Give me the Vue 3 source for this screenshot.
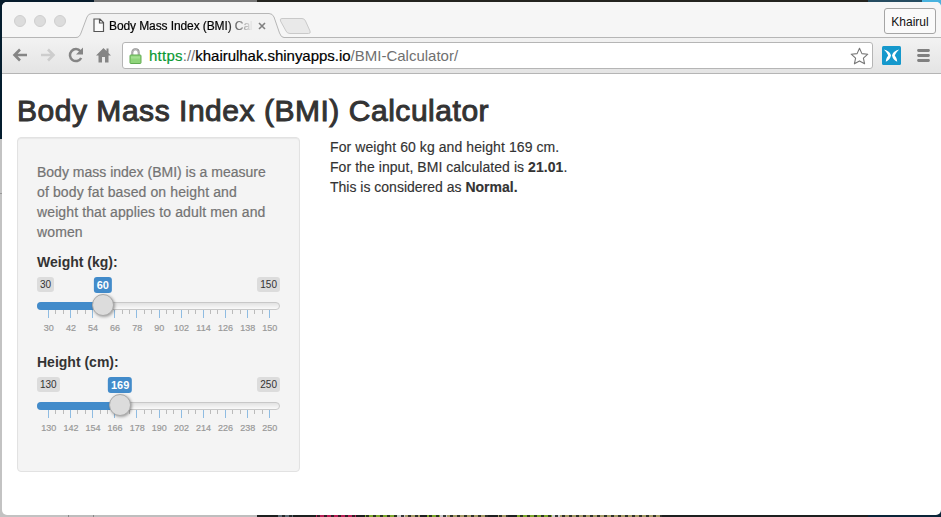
<script setup>
const bmiSliders = [
  { label: 'Weight (kg):', min: 30, max: 150, value: 60, fill: 27.1 },
  { label: 'Height (cm):', min: 130, max: 250, value: 169, fill: 34.2 },
]

function ticks(min) {
  return Array.from({ length: 31 }, (_, i) => ({
    x: 11.5 + (i * 221) / 30,
    major: i % 3 === 0,
    label: min + (i / 3) * 12,
  }))
}
</script>

<template>
  <div class="desktop">
    <div class="code-behind"></div>
    <div class="window">
      <header class="tabstrip">
        <div class="lights"><i></i><i></i><i></i></div>
        <div class="tab">
          <svg class="tab-shape" width="208" height="25" viewBox="0 0 208 25">
            <path d="M0 24.5C3 24.5 4 22.5 5 20L11 4Q12.300 .5 16 .5H193Q196.500 .5 198 4L203.500 20Q205 24.500 208 24.500V25H0Z" fill="#f2f2f2" />
            <path d="M0 24.5C3 24.5 4 22.5 5 20L11 4Q12.300 .5 16 .5H193Q196.500 .5 198 4L203.500 20Q205 24.500 208 24.500" fill="none" stroke="#b6b6b6" />
          </svg>
          <svg class="page-icon" width="12" height="15" viewBox="0 0 12 15">
            <path d="M1 1H7L10.500 4.500V13.500H1ZM6.500 1V5H10.500" fill="#fbfbfb" stroke="#555" stroke-width="1.200" />
          </svg>
          <span class="tab-title">Body Mass Index (BMI) Calc</span>
          <svg class="close" width="8" height="8" viewBox="0 0 8 8"><path d="M1 1L7 7M7 1L1 7" stroke="#808080" stroke-width="1.600" /></svg>
        </div>
        <svg class="new-tab" width="33" height="18" viewBox="0 0 33 18">
          <path d="M3 .5H23Q25.500 .5 26.500 3L31 13Q32 15.500 29.500 15.500H11Q8 15.500 7 13L1.500 3Q.5 .5 3 .5Z" fill="#e9e9e9" stroke="#c9c9c9" />
        </svg>
        <button class="profile">Khairul</button>
      </header>

      <nav class="toolbar">
        <svg class="nav back" width="16" height="14" viewBox="0 0 16 14"><path d="M15 7H2.500M8 1.500L2.500 7L8 12.500" fill="none" stroke="#858585" stroke-width="2.600" /></svg>
        <svg class="nav forward" width="16" height="14" viewBox="0 0 16 14"><path d="M1 7H13.500M8 1.500L13.500 7L8 12.500" fill="none" stroke="#cdcdcd" stroke-width="2.600" /></svg>
        <svg class="nav reload" width="16" height="16" viewBox="0 0 16 16">
          <path d="M12.500 4.200A6 6 0 1 0 13.200 11" fill="none" stroke="#858585" stroke-width="2.500" />
          <path d="M15 .5V7.500H8Z" fill="#858585" />
        </svg>
        <svg class="nav home" width="15" height="16" viewBox="0 0 15 16">
          <path d="M7.500 1L0 8.500H2.500V15.500H6V10H9V15.500H12.500V8.500H15L12.500 6V1.500H10.500V4Z" fill="#858585" />
        </svg>
        <div class="address">
          <svg class="lock" width="13" height="16" viewBox="0 0 13 16">
            <path d="M3.300 8V4.500Q3.300 1.300 6.500 1.300Q9.700 1.300 9.700 4.500V8" fill="none" stroke="#8b8b8b" stroke-width="1.900" />
            <path d="M3.300 8V4.500Q3.300 1.300 6.500 1.300Q9.700 1.300 9.700 4.500V8" fill="none" stroke="#dadada" stroke-width=".6" />
            <rect x="1" y="7" width="11" height="8.500" rx=".8" fill="#8fd47a" stroke="#62ab53" />
            <path d="M2 9.500H11" stroke="#a4df91" stroke-width="2" />
          </svg>
          <span class="url"><b class="scheme">https</b><b class="muted">://</b><b class="host">khairulhak.shinyapps.io</b><b class="muted">/BMI-Calculator/</b></span>
          <svg class="star" width="19" height="18" viewBox="0 0 19 18">
            <path d="M9.500 1.200L11.900 6.600L17.800 7.200L13.400 11.100L14.600 16.800L9.500 13.900L4.400 16.800L5.600 11.100L1.200 7.200L7.100 6.600Z" fill="#fff" stroke="#777" stroke-width="1.100" stroke-linejoin="round" />
          </svg>
        </div>
        <svg class="extension" width="19" height="19" viewBox="0 0 19 19">
          <rect width="19" height="19" rx="1.500" fill="#1598cc" />
          <path d="M1.800 3.600C5.200 4.200 8 6.300 9 9.200C8.600 11.800 7 14.300 3.800 15.800C4 13.200 4.600 11.400 6.200 9.800C5.400 7.300 4 5.500 1.800 3.600ZM17.200 3.600C13.800 4.200 11 6.300 10 9.200C10.400 11.800 12 14.300 15.200 15.800C15 13.200 14.400 11.400 12.800 9.800C13.600 7.300 15 5.500 17.200 3.600Z" fill="#fff" />
        </svg>
        <svg class="menu" width="13" height="13" viewBox="0 0 13 13"><path d="M1.500 1.500H11.500M1.500 6.500H11.500M1.500 11.500H11.500" stroke="#808080" stroke-width="2.800" stroke-linecap="round" /></svg>
      </nav>

      <main class="page">
        <h2>Body Mass Index (BMI) Calculator</h2>
        <div class="columns">
          <form class="well">
            <p class="help">Body mass index (BMI) is a measure<br /><span class="wide">of body fat based on height and<br />weight that applies to adult men and<br />women</span></p>
            <section v-for="s in bmiSliders" :key="s.label" class="control">
              <label>{{ s.label }}</label>
              <div class="bounds">
                <span class="bound">{{ s.min }}</span>
                <span class="bound">{{ s.max }}</span>
                <span class="current" :style="{ left: s.fill + '%' }">{{ s.value }}</span>
              </div>
              <div class="track">
                <div class="bar" :style="{ width: s.fill + '%' }"></div>
                <div class="handle" :style="{ left: s.fill + '%' }"></div>
              </div>
              <svg class="grid" width="243" height="26" viewBox="0 0 243 26">
                <g v-for="t in ticks(s.min)" :key="t.x">
                  <rect :x="Math.round(t.x - 0.5)" y="0" width="1" :height="t.major ? 8 : 4" :fill="t.major ? '#8fbce2' : '#bbb'" />
                  <text v-if="t.major" :x="t.x + 0.3" y="21" text-anchor="middle">{{ t.label }}</text>
                </g>
              </svg>
            </section>
          </form>
          <div class="result">
            <div class="wide">For weight 60 kg and height 169 cm.</div>
            <div class="r2">For the input, BMI calculated is <strong>21.01</strong>.</div>
            <div>This is considered as <strong>Normal.</strong></div>
          </div>
        </div>
      </main>
    </div>
  </div>
</template>

<style>
body {
  margin: 0;
  overflow: hidden;
}
</style>

<style scoped>
* {
  box-sizing: border-box;
}
.desktop {
  position: relative;
  width: 941px;
  height: 517px;
  padding: 2px 0 2px 2px;
  overflow: hidden;
  font-family: "Liberation Sans", Arial, sans-serif;
  color: #333;
  background:
    linear-gradient(90deg, #061b2b 94px, #777 94px 257px, #24241f 257px 868px, #254b60 868px 922px, #49b3df 922px) 0 0 / 100% 8px no-repeat,
    linear-gradient(90deg, #c2c2c2 68px, #888 68px 69px, #bdbdbd 69px 93px, #888 93px 94px, #bebebe 94px 257px, #1d1f1f 257px 868px, #0a2438 868px) 0 100% / 100% 8px no-repeat,
    linear-gradient(#041d2e 139px, #c3c3c3 139px 193px, #999 193px 194px, #c3c3c3 194px) 0 0 / 8px 100% no-repeat,
    #0a2438;
}
/* Top edge of the editor line peeking out under the window */
.code-behind {
  position: absolute;
  left: 278px;
  top: 515px;
  width: 384px;
  height: 2px;
  background: linear-gradient(90deg, #5d6b73 15px, transparent 15px 38px, #b81f55 38px 78px, transparent 78px 87px, #7da62d 87px 119px, #c8c8c8 119px 127px, #a39a66 127px 142px, transparent 142px 149px, #7da62d 149px 162px, #c8c8c8 162px 169px, #a39a66 169px 210px, transparent 210px 220px, #a39a66 220px 230px, transparent 230px 239px, #7da62d 239px 274px, #c8c8c8 274px 282px, #a39a66 282px);
  mask-image: repeating-linear-gradient(90deg, #000 0 4px, rgba(0, 0, 0, 0.15) 4px 7px);
}
.window {
  position: relative;
  height: 513px;
  border-radius: 5px;
  background: #fff;
  overflow: hidden;
}
.tabstrip {
  display: flex;
  height: 36px;
  background: #f6f6f6;
  border-bottom: 1px solid #b6b6b6;
}
.lights {
  display: flex;
  gap: 8px;
  padding: 13px 0 0 12px;
  width: 74px;
}
.lights i {
  width: 12px;
  height: 12px;
  border-radius: 50%;
  background: #dcdcdc;
  border: 1px solid #cfcfcf;
}
.tab {
  position: relative;
  display: flex;
  align-items: center;
  width: 208px;
  height: 25px;
  margin-top: 11px;
  padding-left: 17px;
}
.tab-shape {
  position: absolute;
  left: 0;
  top: 0;
}
.page-icon {
  position: relative;
  margin-right: 4px;
}
.tab-title {
  position: relative;
  width: 143px;
  overflow: hidden;
  white-space: nowrap;
  font-size: 12px;
  line-height: 16px;
  letter-spacing: -0.1px;
  color: #000;
  -webkit-text-stroke: 0.2px #000;
  mask-image: linear-gradient(90deg, #000 116px, transparent 144px);
}
.close {
  position: relative;
  margin-left: 6px;
}
.new-tab {
  margin: 16px 0 0 -5px;
}
.profile {
  width: 52px;
  height: 26px;
  margin: 6px 5px 0 auto;
  padding: 1px 0 0;
  border: 1px solid #a5a5a5;
  border-radius: 3px;
  background: #fafafa;
  font: 12px "Liberation Sans", Arial, sans-serif;
  color: #111;
}
.toolbar {
  display: flex;
  align-items: center;
  height: 36px;
  padding-left: 10px;
  background: linear-gradient(#f2f2f2, #e4e4e4);
  border-bottom: 1px solid #b5b5b5;
}
.back,
.forward,
.reload {
  margin-bottom: 1px;
}
.forward {
  margin-left: 12px;
}
.reload {
  margin-left: 12px;
}
.home {
  margin-left: 12px;
  margin-bottom: 1px;
}
.address {
  display: flex;
  align-items: center;
  width: 751px;
  height: 27px;
  margin-left: 11px;
  padding: 0 3px 0 6px;
  border: 1px solid #b5b5b5;
  border-radius: 3px;
  background: #fff;
}
.url {
  flex: 1;
  margin-left: 7px;
  font-size: 15px;
  line-height: 20px;
  color: #000;
  white-space: nowrap;
}
.url b {
  font-weight: 400;
}
.url .scheme {
  color: #0b9a35;
  letter-spacing: 0.25px;
  -webkit-text-stroke: 0.2px #0b9a35;
}
.host {
  letter-spacing: -0.03px;
  -webkit-text-stroke: 0.2px #000;
}
.muted {
  color: #707070;
}
.extension {
  margin-left: 9px;
}
.menu {
  margin-left: 16px;
}
.page {
  padding: 18px 0 0 15px;
}
h2 {
  margin: 0;
  height: 45px;
  font-size: 30px;
  line-height: 37px;
  font-weight: 400;
  letter-spacing: 0.53px;
  white-space: nowrap;
  -webkit-text-stroke: 1px #333;
}
.columns {
  display: flex;
  gap: 30px;
}
.well {
  width: 283px;
  height: 335px;
  padding: 24px 19px 0;
  border: 1px solid #e2e2e2;
  border-radius: 4px;
  background: #f4f4f4;
  box-shadow: inset 0 1px 1px #e8e8e8;
}
.help {
  margin: 0 0 10px;
  font-size: 14px;
  line-height: 20px;
  color: #737373;
  white-space: nowrap;
  -webkit-text-stroke: 0.2px #737373;
}
.help .wide {
  letter-spacing: 0.12px;
}
.control {
  height: 100px;
}
label {
  display: block;
  height: 25px;
  font-size: 14px;
  line-height: 20px;
  font-weight: 700;
}
.bounds {
  position: relative;
  display: flex;
  justify-content: space-between;
  align-items: flex-start;
  height: 25px;
}
.bound {
  height: 15px;
  padding: 0 3px;
  border-radius: 3px;
  background: #dcdcdc;
  font-size: 10px;
  line-height: 15px;
}
.current {
  position: absolute;
  top: 0;
  height: 16px;
  padding: 0 3px;
  border-radius: 3px;
  background: #428bca;
  color: #fff;
  font-size: 11px;
  line-height: 16px;
  font-weight: 700;
  transform: translateX(-50%);
}
.track {
  position: relative;
  height: 8px;
  border: 1px solid #c8c8c8;
  border-radius: 4px;
  background: linear-gradient(#e2e2e2, #fafafa);
}
.bar {
  height: 8px;
  margin: -1px;
  border-radius: 4px 0 0 4px;
  background: #428bca;
}
.handle {
  position: absolute;
  top: -9px;
  width: 22px;
  height: 22px;
  margin-left: -11.5px;
  border: 1px solid #aaa;
  border-radius: 50%;
  background: #dcdcdc;
  box-shadow: 1px 1px 3px rgba(0, 0, 0, 0.35);
}
.grid {
  display: block;
}
.grid text {
  font-size: 9px;
  fill: #999;
  stroke: #999;
  stroke-width: 0.2px;
}
.result {
  font-size: 14px;
  line-height: 20px;
  white-space: nowrap;
  -webkit-text-stroke: 0.15px #333;
}
.result .wide {
  letter-spacing: 0.08px;
}
.r2 {
  letter-spacing: 0.06px;
}
</style>
